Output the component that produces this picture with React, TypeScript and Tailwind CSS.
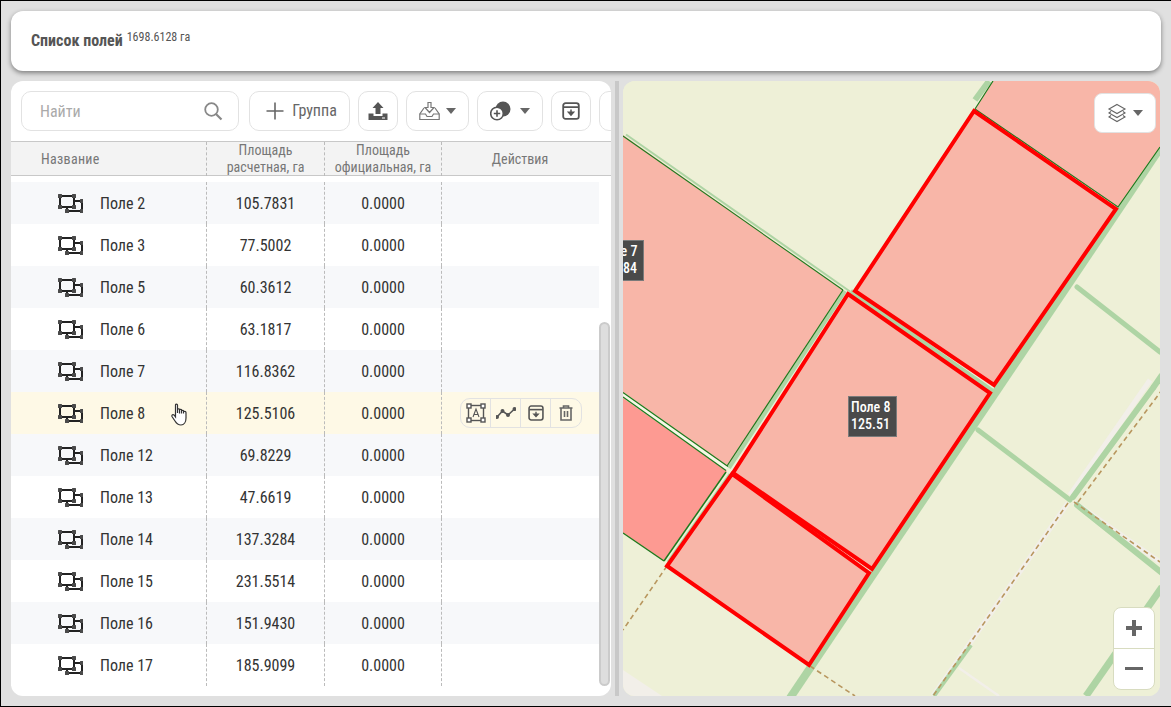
import React from "react";

function FieldIcon() {
  return (
    <svg width="26" height="20" viewBox="0 0 26 20" fill="none" className="shrink-0">
      <path d="M3 3V14H17V3H3Z" stroke="#222" strokeWidth="2" />
      <path d="M17 8H25V18H10V14" stroke="#222" strokeWidth="2" />
      {[[1,1],[15,1],[1,12],[15,12],[8,16],[23,16],[23,6]].map(([x,y],i)=>(
        <rect key={i} x={x} y={y} width="4" height="4" rx="0.5" fill="#4a4a4a" />
      ))}
    </svg>
  );
}

const rows = [
  ["Поле 2","105.7831"],["Поле 3","77.5002"],["Поле 5","60.3612"],["Поле 6","63.1817"],["Поле 7","116.8362"],["Поле 8","125.5106"],
  ["Поле 12","69.8229"],["Поле 13","47.6619"],["Поле 14","137.3284"],["Поле 15","231.5514"],["Поле 16","151.9430"],["Поле 17","185.9099"],
];

function Caret() {
  return <span className="w-0 h-0 border-l-[5px] border-r-[5px] border-t-[6px] border-l-transparent border-r-transparent border-t-[#666]" />;
}

function ArchiveIcon({size=18}:{size?:number}) {
  return (
    <svg width={size} height={size} viewBox="0 0 18 18" fill="none">
      <rect x="1.2" y="1.2" width="15.6" height="15.6" rx="2.4" stroke="#555" strokeWidth="1.8" />
      <path d="M1.5 5.2H16.5" stroke="#555" strokeWidth="1.8" />
      <path d="M9 7.5V12M6.5 10.2L9 13L11.5 10.2Z" stroke="#555" strokeWidth="1.5" fill="#555" />
    </svg>
  );
}

function Btn({ w, children }: { w: string; children: React.ReactNode }) {
  return <div className={`h-10 shrink-0 ${w} rounded-[10px] border border-[#e2e2e2] bg-white flex items-center justify-center`}>{children}</div>;
}

function Map() {
  const road = "#aed4a4";
  const dash = "#b8965e";
  const light = "#f2efe9";
  const pink = "#f8b6a8";
  const line = "#1d7a1d";
  return (
    <svg className="absolute inset-0" width="537" height="615" viewBox="623 81 537 615">
      <rect x="623" y="81" width="537" height="615" fill="#eef0d7" />
      <path d="M623 670L662 696H623Z" fill={light} />
      <g fill="none">
        <path d="M1070 495L1150 380" stroke={light} strokeWidth="5" />
        <path d="M1068 503L933 696" stroke={light} strokeWidth="5" />
        <path d="M1074 502L1160 562" stroke={light} strokeWidth="5" />
        <path d="M959 668L999 696" stroke={light} strokeWidth="2.5" />
        <path d="M1165 141L790 698" stroke={road} strokeWidth="8" />
        <path d="M975 100L989 81" stroke={road} strokeWidth="6" />
        <path d="M978 430L1070 500" stroke={road} strokeWidth="5" strokeLinecap="round" />
        <path d="M1077 287L1160 352" stroke={road} strokeWidth="5" strokeLinecap="round" />
        <path d="M1073 497L1153 388" stroke={road} strokeWidth="6" strokeLinecap="round" />
        <path d="M1153 388L1162 375" stroke={road} strokeWidth="6" />
        <path d="M1077 505L1162 573" stroke={road} strokeWidth="6" strokeLinecap="round" />
        <path d="M1162 587L1086 696" stroke={road} strokeWidth="7" />
        <path d="M971 645L934 696" stroke={road} strokeWidth="4" />
        <g stroke={dash} strokeWidth="1.6" strokeDasharray="5 3.5">
          <path d="M1078 502L1162 390" />
          <path d="M1074 502L1160 562" />
          <path d="M1068 503L933 696" />
          <path d="M667 566L623 630" />
          <path d="M810 666L855 696" />
        </g>
      </g>
      <path d="M993 81H1160V147L1118 207L975 109Z" fill={pink} />
      <path d="M623 135L843 290L727 468L623 393Z" fill={pink} />
      <path d="M623 398L727 471L664 561L623 533Z" fill="#fd9a92" />
      <g fill="none">
        <path d="M626 134.5L850 291.5" stroke={road} strokeWidth="2" />
        <path d="M623 136L843 290" stroke={line} strokeWidth="1.1" />
        <path d="M850 292L992 392" stroke={road} strokeWidth="7" />
        <path d="M845 291L729 468" stroke={road} strokeWidth="4" />
        <path d="M843 290L727 466" stroke={line} strokeWidth="1.2" />
        <path d="M730 474L668 562" stroke={road} strokeWidth="3" />
        <path d="M726 472L664 561" stroke={line} strokeWidth="1.5" />
        <path d="M623 394.5L727 468.5" stroke="#f6f8e6" strokeWidth="4.5" />
        <path d="M623 392.5L728 466.5M623 397L726 470.5" stroke={line} strokeWidth="1.2" />
        <path d="M623 533L664 561" stroke={line} strokeWidth="1.4" />
        <path d="M975 109L1118 207L1160 147M993 81L975 109" stroke={line} strokeWidth="1.2" />
      </g>
      <g fill={pink} stroke="#ff0000" strokeWidth="4" strokeLinejoin="miter">
        <path d="M974 111L1116 209L994 385L855 291Z" />
        <path d="M848 294L990 393L872 569L733 473Z" />
        <path d="M732 474L869 573L809 665L667 566Z" />
      </g>
    </svg>
  );
}

function Label({ lines, cls }: { lines: string[]; cls: string }) {
  return (
    <div className={`absolute ${cls} h-[41px] bg-[#4a4a4a] border border-[#7a7a7a] text-white text-[14px] leading-[17px] font-medium pl-[2px] pt-[2px]`}>
      {lines.map((l) => <div key={l}>{l}</div>)}
    </div>
  );
}

export default function App() {
  return (
    <div className="w-[1171px] h-[707px] bg-[#e0e0e0] border border-black border-r-0 overflow-hidden flex flex-col gap-[10px] pl-[10px] pt-[10px] pr-[10px] [font-family:'Roboto',sans-serif] [font-stretch:75%] text-[#333]">
      <div className="w-[1150px] h-[60px] shrink-0 rounded-xl bg-white shadow-[0_2px_5px_rgba(0,0,0,0.45)] pl-5 flex items-start pt-[22px]">
        <span className="font-bold text-[16px] leading-[16px] text-[#555]">Список полей</span>
        <span className="text-[12px] leading-[12px] text-[#555] ml-1 -mt-[2px]">1698.6128 га</span>
      </div>
      <div className="flex h-[615px] shrink-0">
        <div className="w-[600px] h-full rounded-xl bg-white overflow-hidden relative shrink-0">
          <div className="flex gap-2 pl-[10px] pt-[10px] h-[60px] overflow-hidden">
            <div className="w-[218px] h-10 shrink-0 rounded-[10px] border border-[#e2e2e2] flex items-center justify-between pl-[18px] pr-[15px]">
              <span className="text-[#aaa] text-[16px] mt-[2px]">Найти</span>
              <svg width="20" height="20" viewBox="0 0 20 20" fill="none"><circle cx="8.5" cy="8.5" r="6.3" stroke="#888" strokeWidth="1.8" /><path d="M13 13L18.5 18.5" stroke="#888" strokeWidth="2.2" /></svg>
            </div>
            <div className="w-[101px] ml-[2px] h-10 shrink-0 rounded-[10px] border border-[#e2e2e2] flex items-center justify-center gap-2 pl-1 text-[16px] text-[#666]">
              <svg width="18" height="18" viewBox="0 0 18 18"><path d="M9 0.5V17.5M0.5 9H17.5" stroke="#666" strokeWidth="1.6" /></svg>
              Группа
            </div>
            <Btn w="w-10">
              <svg width="20" height="20" viewBox="0 0 20 20"><path d="M10 1L15.5 7H12.5V13H7.5V7H4.5Z" fill="#555" /><path d="M0.5 12.5H5.5V15H14.5V12.5H19.5V19H0.5Z" fill="#555" /><rect x="14" y="16.5" width="3" height="1" fill="#fff" /></svg>
            </Btn>
            <Btn w="w-[63px]">
              <div className="flex items-center gap-[6px]">
                <svg width="21" height="20" viewBox="0 0 21 20" fill="none" stroke="#777" strokeWidth="1.2"><path d="M10.5 11.5L6 6.5H9V1.5H12V6.5H15Z" /><path d="M5 7L0.8 13V18.5H20.2V13L16 7" /><path d="M0.8 13H6.5L8 15.5H13L14.5 13H20.2" /></svg>
                <Caret />
              </div>
            </Btn>
            <Btn w="w-[66px]">
              <div className="flex items-center gap-[9px]">
                <svg width="21" height="20" viewBox="0 0 21 20"><circle cx="13" cy="8" r="7.5" fill="#555" /><circle cx="7" cy="12.5" r="6.3" fill="#fff" stroke="#555" strokeWidth="1.6" /><path d="M7 9.3V15.7M3.8 12.5H10.2" stroke="#555" strokeWidth="1.6" /></svg>
                <Caret />
              </div>
            </Btn>
            <Btn w="w-10"><ArchiveIcon /></Btn>
            <Btn w="w-10"><span /></Btn>
          </div>
          <div className="grid grid-cols-[195px_118px_117px_157px_1fr] h-[35px] bg-[#f3f3f3] border-y border-[#c8c8c8] text-[14px] leading-[17px] text-[#777] text-center">
            <div className="text-left pl-[30px] flex items-center tracking-[0.3px]">Название</div>
            <div className="border-l border-dashed border-[#bbb] flex items-center justify-center">Площадь<br />расчетная, га</div>
            <div className="border-l border-dashed border-[#bbb] flex items-center justify-center">Площадь<br />официальная, га</div>
            <div className="border-l border-dashed border-[#bbb] flex items-center justify-center">Действия</div>
          </div>
          <div className="pt-[6px] w-[588px] relative">
            {rows.map(([name, area], i) => (
              <div key={name} className={`h-[42px] grid grid-cols-[195px_118px_117px_1fr] text-[16px] items-center text-center ${name === "Поле 8" ? "bg-[#fef9e6]" : i % 2 === 0 ? "bg-[#f7f8fa]" : "bg-white"}`}>
                <div className="flex items-center pl-[46px] gap-[17px] text-left relative">
                  <FieldIcon />
                  <span className="mt-[2px]">{name}</span>
                  {name === "Поле 8" && (
                    <svg className="absolute left-[160px] top-[3px]" width="18" height="24" viewBox="0 0 18 24" fill="#fff" stroke="#333" strokeWidth="1.2"><path d="M4.5 2C4.5 0.8 6.5 0.8 6.5 2V10V6.5C6.5 5.5 8.5 5.5 8.5 6.5V10.5V7C8.5 6 10.5 6 10.5 7V10.5V8C10.5 7 12.5 7 12.5 8V10.5V9C12.5 8 15 8 15 9.5V15C15 19 13 22 10 22C7 22 5.5 20.5 4 18L1 13.5C0.5 12 2 11 3 12L4.5 14Z" /></svg>
                  )}
                </div>
                <div className="h-full flex items-center justify-center border-l border-dashed border-[#bbb] pt-[2px]">{area}</div>
                <div className="h-full flex items-center justify-center border-l border-dashed border-[#bbb] pt-[2px]">0.0000</div>
                <div className="h-full flex items-center border-l border-dashed border-[#bbb] pl-[18px]">
                  {name === "Поле 8" && (
                    <div className="w-[122px] h-[30px] rounded-[10px] border border-[#e2e2e2] grid grid-cols-4 divide-x divide-[#e2e2e2]">
                      <div className="flex items-center justify-center">
                        <svg width="20" height="20" viewBox="0 0 20 20" fill="none" stroke="#555" strokeWidth="1.4"><rect x="2.5" y="2.5" width="15" height="15" />{[[1,1],[15,1],[1,15],[15,15]].map(([x,y],k)=><rect key={k} x={x} y={y} width="4" height="4" fill="#fff" />)}<path d="M7 14L10 6L13 14M8 11.5H12" strokeWidth="1.1" /></svg>
                      </div>
                      <div className="flex items-center justify-center">
                        <svg width="20" height="14" viewBox="0 0 20 14" fill="none" stroke="#555" strokeWidth="1.6"><path d="M1 11L6.5 5L12 9L18.5 3" />{[[1,11],[6.5,5],[12,9],[18.5,3]].map(([x,y],k)=><circle key={k} cx={x} cy={y} r="1.2" fill="#555" />)}</svg>
                      </div>
                      <div className="flex items-center justify-center"><ArchiveIcon size={16} /></div>
                      <div className="flex items-center justify-center">
                        <svg width="14" height="16" viewBox="0 0 14 16" fill="none" stroke="#666" strokeWidth="1.6"><path d="M0.5 3H13.5M4.5 3V1H9.5V3M2 3V15H12V3M5.5 6V12M8.5 6V12" /></svg>
                      </div>
                    </div>
                  )}
                </div>
              </div>
            ))}
            <div className="h-[10px]" />
          </div>
          <div className="absolute right-[1px] top-[241px] w-[11px] h-[364px] rounded-full bg-[#dedede] border-2 border-[#cbcbcb]" />
        </div>
        <div className="w-[12px] shrink-0 flex justify-center pr-[1px] "><div className="w-1 h-full bg-[#c8c8c8]" /></div>
        <div className="w-[537px] h-full rounded-xl overflow-hidden relative shrink-0 bg-[#eef0d7]">
          <Map />
          <Label lines={["Поле 7", "116.84"]} cls="left-[-28px] top-[159px] w-[49px]" />
          <Label lines={["Поле 8", "125.51"]} cls="left-[225px] top-[315px] w-[49px]" />
          <div className="absolute left-[471px] top-[12px] w-[62px] h-10 rounded-lg bg-white border border-[#e2e2e2] flex items-center justify-center gap-[6px]">
            <svg width="20" height="20" viewBox="0 0 20 20" fill="none" stroke="#666" strokeWidth="1.1"><path d="M10 1.5L18 6L10 10.5L2 6Z" /><path d="M4 8.5L2 10L10 14.5L18 10L16 8.5" /><path d="M4 12.5L2 14L10 18.5L18 14L16 12.5" /></svg>
            <Caret />
          </div>
          <div className="absolute left-[490px] top-[526px] w-[42px] h-[83px] rounded-lg bg-white border border-[#d8dcc0] flex flex-col items-center">
            <div className="h-[41px] w-full border-b border-[#d8dcc0] flex items-center justify-center">
              <svg width="16" height="16" viewBox="0 0 16 16"><path d="M8 0V16M0 8H16" stroke="#666" strokeWidth="4" /></svg>
            </div>
            <div className="h-[41px] w-full flex items-center justify-center">
              <svg width="18" height="4" viewBox="0 0 18 4"><rect width="18" height="3" fill="#666" /></svg>
            </div>
          </div>
        </div>
      </div>
    </div>
  );
}
